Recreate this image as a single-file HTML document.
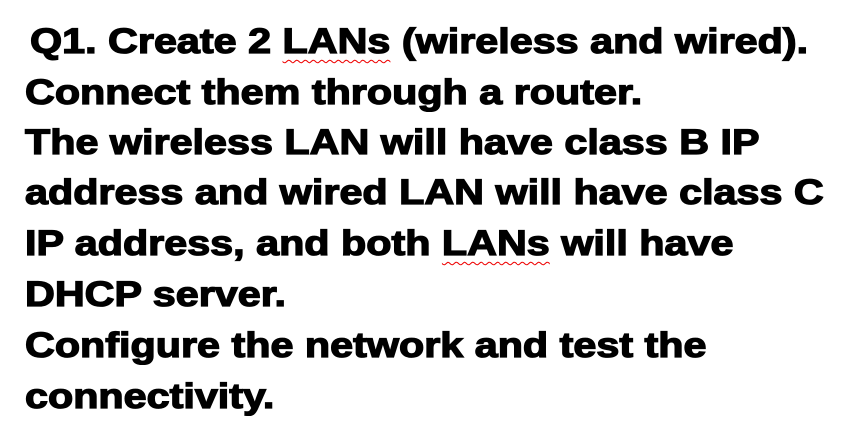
<!DOCTYPE html>
<html><head><meta charset="utf-8"><style>
html,body{margin:0;padding:0;background:#fff;width:846px;height:448px;overflow:hidden}
.l{position:absolute;left:25px;font-family:"Liberation Sans",Arial,sans-serif;font-weight:bold;font-size:35px;color:#000;white-space:nowrap;-webkit-text-stroke:1.3px #000;line-height:40px;transform:scaleX(1.18);transform-origin:0 0}
.s{text-decoration:underline wavy #e00;text-decoration-thickness:1px;text-underline-offset:6px}
</style></head><body>
<div class="l" style="top:22px;left:30px">Q1. Create 2 <span class="s">LANs</span> (wireless and wired).</div>
<div class="l" style="top:73px">Connect them through a router.</div>
<div class="l" style="top:123px">The wireless LAN will have class B IP</div>
<div class="l" style="top:173px">address and wired LAN will have class C</div>
<div class="l" style="top:224px">IP address, and both <span class="s">LANs</span> will have</div>
<div class="l" style="top:275px">DHCP server.</div>
<div class="l" style="top:326px">Configure the network and test the</div>
<div class="l" style="top:377px">connectivity.</div>
</body></html>
